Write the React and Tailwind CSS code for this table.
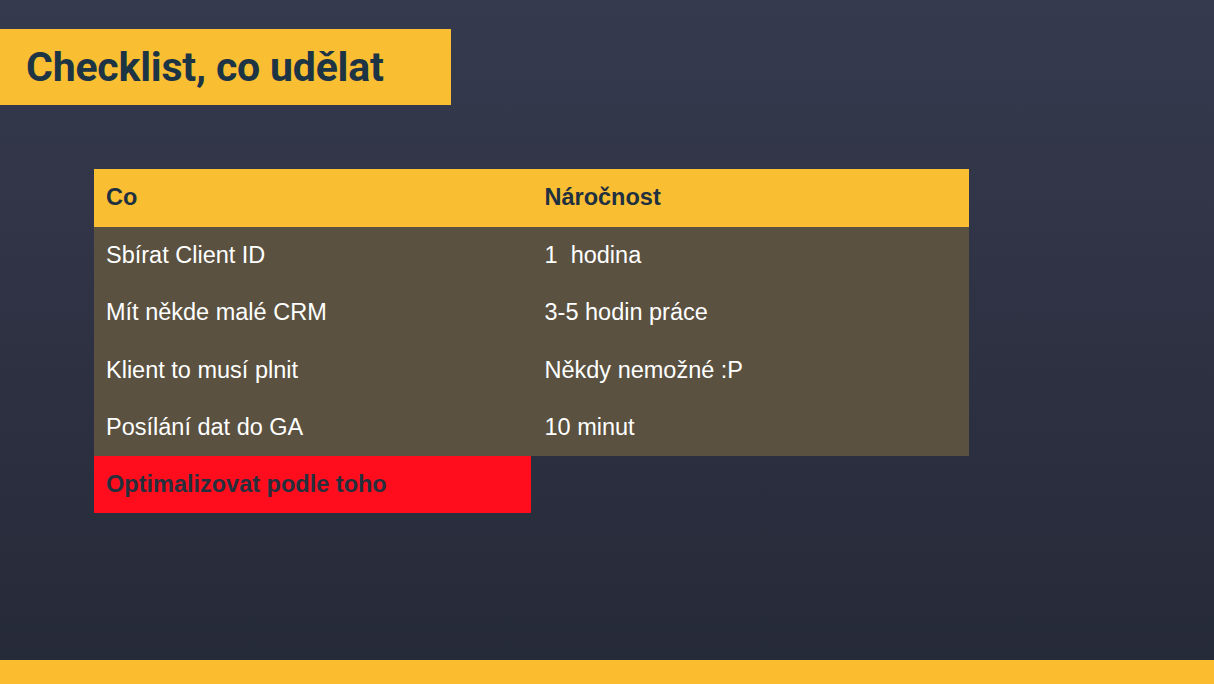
import React from 'react'

const rows = [
  ['Sbírat Client ID', '1  hodina'],
  ['Mít někde malé CRM', '3-5 hodin práce'],
  ['Klient to musí plnit', 'Někdy nemožné :P'],
  ['Posílání dat do GA', '10 minut'],
]

export default function App() {
  return (
    <div className="w-[1214px] h-[684px] flex flex-col bg-gradient-to-b from-[#363a4e] to-[#252a38] overflow-hidden">
      {/* Title */}
      <div className="mt-[29px] w-[451px] h-[76px] bg-[#f9be32] flex items-center pl-[26px]">
        <h1 className="font-['Roboto',sans-serif] font-bold text-[41px] text-[#1c3444] tracking-[-0.2px] pt-[2px]">
          Checklist, co udělat
        </h1>
      </div>

      {/* Table */}
      <div className="ml-[94px] mt-[64px] w-[875px] font-['Liberation_Sans',Arial,sans-serif] text-[23.5px]">
        <div className="h-[58px] bg-[#f9be32] grid grid-cols-2 items-center font-bold text-[#1f3040]">
          <div className="pl-[12px]">Co</div>
          <div className="pl-[13px]">Náročnost</div>
        </div>
        {rows.map(([what, effort], i) => (
          <div key={i} className="h-[57.25px] bg-[#5a5140] grid grid-cols-2 items-center text-white">
            <div className="pl-[12px] whitespace-pre">{what}</div>
            <div className="pl-[13px] whitespace-pre">{effort}</div>
          </div>
        ))}
        <div className="h-[57px] w-[437px] bg-[#ff0d1d] flex items-center pl-[12px] font-bold text-[#26303d]">
          Optimalizovat podle toho
        </div>
      </div>

      <div className="mt-auto h-[24px] bg-[#fbbd2f]" />
    </div>
  )
}
